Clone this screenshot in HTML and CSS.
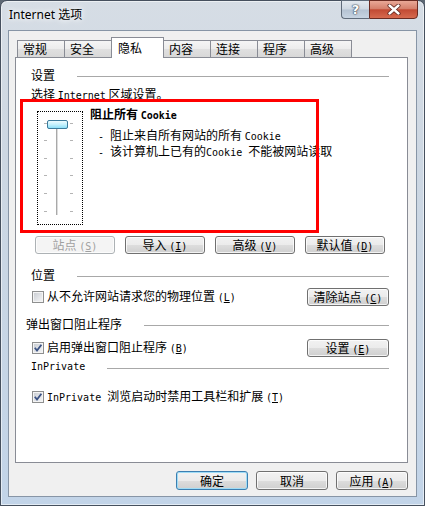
FILE: index.html
```html
<!DOCTYPE html>
<html lang="zh">
<head>
    <meta charset="UTF-8">
    <meta name="viewport" content="width=device-width, initial-scale=1.0">
    <title>Internet 选项</title>
    <link rel="stylesheet" href="styles.css">
</head>
<body>
    <div class="window">
        <!-- 标题栏 -->
        <div class="titlebar">
            <div class="title">Internet 选项</div>
            <div class="caption-buttons">
                <div class="cap-help">?</div>
                <div class="cap-close">
                    <svg width="14" height="11" viewBox="0 0 14 11">
                        <path d="M2.5 1.5 L11.5 9.5 M11.5 1.5 L2.5 9.5" stroke="#5a2018" stroke-width="4" stroke-linecap="round"/>
                        <path d="M2.5 1.5 L11.5 9.5 M11.5 1.5 L2.5 9.5" stroke="#fff" stroke-width="2.4" stroke-linecap="round"/>
                    </svg>
                </div>
            </div>
        </div>

        <div class="client">
            <!-- 选项卡 -->
            <div class="tabs">
                <div class="tab">常规</div>
                <div class="tab">安全</div>
                <div class="tab active">隐私</div>
                <div class="tab">内容</div>
                <div class="tab">连接</div>
                <div class="tab">程序</div>
                <div class="tab">高级</div>
            </div>

            <div class="tab-panel">
                <div class="group-title"><span>设置</span><div class="rule"></div></div>
                <div class="intro">选择 <span class="en">Internet</span> 区域设置。</div>

                <div class="level">
                    <div class="slider">
                        <svg width="44" height="112" viewBox="0 0 44 112">
                            <g stroke="#b4b4b4" stroke-width="1">
                                <path d="M6 11.5h3M32 11.5h3"/>
                                <path d="M6 28.5h3M32 28.5h3"/>
                                <path d="M6 46.5h3M32 46.5h3"/>
                                <path d="M6 63.5h3M32 63.5h3"/>
                                <path d="M6 81.5h3M32 81.5h3"/>
                                <path d="M6 99.5h3M32 99.5h3"/>
                            </g>
                            <rect x="18" y="14" width="1" height="89" fill="#a9a9a9"/>
                            <rect x="19" y="14" width="1" height="89" fill="#dcdcdc"/>
                            <defs>
                                <linearGradient id="thumb" x1="0" y1="0" x2="0" y2="1">
                                    <stop offset="0" stop-color="#f2fdff"/>
                                    <stop offset="0.5" stop-color="#c4f1fd"/>
                                    <stop offset="1" stop-color="#86ddf6"/>
                                </linearGradient>
                            </defs>
                            <rect x="9.5" y="8.5" width="20" height="8" rx="1.5" fill="url(#thumb)" stroke="#3b7b9c"/>
                        </svg>
                    </div>
                    <div class="level-text">
                        <div class="level-title">阻止所有 <span class="en">Cookie</span></div>
                        <div class="level-desc first"><span class="en">- </span>阻止来自所有网站的所有 <span class="en">Cookie</span></div>
                        <div class="level-desc"><span class="en">- </span>该计算机上已有的<span class="en">Cookie </span>不能被网站读取</div>
                    </div>
                </div>

                <div class="button-row">
                    <div class="btn disabled">站点 <span class="en">(<u>S</u>)</span></div>
                    <div class="btn">导入 <span class="en">(<u>I</u>)</span></div>
                    <div class="btn">高级 <span class="en">(<u>V</u>)</span></div>
                    <div class="btn">默认值 <span class="en">(<u>D</u>)</span></div>
                </div>

                <div class="group-title location"><span>位置</span><div class="rule"></div></div>
                <div class="check-row location-row">
                    <div class="check">
                        <span class="checkbox"></span>
                        <span>从不允许网站请求您的物理位置 <span class="en">(<u>L</u>)</span></span>
                    </div>
                    <div class="btn side">清除站点 <span class="en">(<u>C</u>)</span></div>
                </div>

                <div class="group-title popup"><span>弹出窗口阻止程序</span><div class="rule"></div></div>
                <div class="check-row popup-row">
                    <div class="check">
                        <span class="checkbox checked"><svg width="10" height="10" viewBox="0 0 10 10"><path d="M1.8 4.8 L4 7.6 L8.4 1.8" fill="none" stroke="#3b5284" stroke-width="1.8"/></svg></span>
                        <span>启用弹出窗口阻止程序 <span class="en">(<u>B</u>)</span></span>
                    </div>
                    <div class="btn side">设置 <span class="en">(<u>E</u>)</span></div>
                </div>

                <div class="group-title inprivate"><span class="en">InPrivate</span><div class="rule"></div></div>
                <div class="check-row inprivate-row">
                    <div class="check">
                        <span class="checkbox checked"><svg width="10" height="10" viewBox="0 0 10 10"><path d="M1.8 4.8 L4 7.6 L8.4 1.8" fill="none" stroke="#3b5284" stroke-width="1.8"/></svg></span>
                        <span><span class="en">InPrivate </span>浏览启动时禁用工具栏和扩展 <span class="en">(<u>T</u>)</span></span>
                    </div>
                </div>

                <!-- 红色标注框 -->
                <div class="highlight"></div>
            </div>

            <div class="dialog-buttons">
                <div class="btn dialog default">确定</div>
                <div class="btn dialog">取消</div>
                <div class="btn dialog">应用 <span class="en">(<u>A</u>)</span></div>
            </div>
        </div>
    </div>
</body>
</html>
```

FILE: styles.css
```css
body {
    margin: 0;
    font-family: "Noto Sans CJK SC", sans-serif;
    font-size: 12px;
    color: #000;
    background-color: #5d6874;
}

.en {
    font-family: "DejaVu Sans Mono", "Liberation Mono", monospace;
    font-size: 10px;
}

.window {
    width: 425px;
    height: 506px;
    box-sizing: border-box;
    border: 1px solid #46505e;
    border-radius: 7px 7px 0 0;
    padding: 0 7px 8px 7px;
    background: linear-gradient(to bottom, #d6dde5 0%, #cdd7e2 30%, #c2d4e8 100%);
    box-shadow: inset 0 0 0 1px rgba(255, 255, 255, 0.55);
    display: flex;
    flex-direction: column;
}

/* 标题栏 */
.titlebar {
    height: 29px;
    display: flex;
    align-items: flex-start;
}

.title {
    margin-top: 7px;
    padding-left: 1px;
    line-height: 14px;
    font-family: "Noto Sans", "Noto Sans CJK SC", sans-serif;
    font-size: 12px;
    text-shadow: 0 0 5px #fff, 0 0 8px #fff;
}

.caption-buttons {
    display: flex;
    margin-left: auto;
    margin-right: -1px;
    margin-top: -1px;
}

.cap-help {
    width: 28px;
    height: 19px;
    box-sizing: border-box;
    border: 1px solid #5f6b7a;
    border-right: none;
    border-radius: 0 0 0 4px;
    background: linear-gradient(to bottom, #e3e9ef 0%, #cfd8e2 48%, #b4c2d2 52%, #c7d4e2 100%);
    text-align: center;
    font-family: "DejaVu Sans", sans-serif;
    font-weight: bold;
    font-size: 13px;
    line-height: 17px;
    color: #fff;
    text-shadow: 0 0 1px #3d4a5a, 0 0 1px #3d4a5a, 0 0 2px #3d4a5a;
}

.cap-close {
    width: 49px;
    height: 19px;
    box-sizing: border-box;
    border: 1px solid #6a2b22;
    border-radius: 0 0 4px 0;
    background: linear-gradient(to bottom, #e9a897 0%, #d5806c 45%, #c24a33 52%, #d66a4f 100%);
    display: flex;
    justify-content: center;
    align-items: center;
}

/* 客户区 */
.client {
    flex: 1;
    background-color: #f0f0f0;
    border: 1px solid #8795a6;
    padding: 0 8px 6px 6px;
    display: flex;
    flex-direction: column;
}

.tabs {
    display: flex;
    align-items: flex-end;
    height: 20px;
    padding-top: 6px;
    margin-left: 2px;
    position: relative;
    z-index: 1;
}

.tab {
    width: 48px;
    height: 17px;
    box-sizing: border-box;
    border: 1px solid #898c95;
    border-bottom: none;
    margin-right: -1px;
    padding-left: 5px;
    line-height: 16px;
    background: linear-gradient(to bottom, #f5f5f5 0%, #ececec 50%, #e0e0e0 51%, #d8d8d8 100%);
}

    .tab.active {
        width: 53px;
        height: 21px;
        margin-bottom: -1px;
        padding-left: 6px;
        line-height: 19px;
        background: #fff;
    }

.tab-panel {
    position: relative;
    height: 406px;
    box-sizing: border-box;
    border: 1px solid #898c95;
    background-color: #fff;
    padding: 10px 18px 0 15px;
}

.group-title {
    display: flex;
    align-items: center;
    gap: 22px;
    line-height: 14px;
}

    .group-title .rule {
        flex: 1;
        height: 1px;
        margin-top: 2px;
        background-color: #a8a8a8;
    }

    .group-title.location {
        margin-top: 14px;
    }

    .group-title.popup {
        margin-top: 11px;
        margin-left: -5px;
    }

    .group-title.inprivate {
        margin-top: 3px;
    }

.intro {
    margin-top: 5px;
    line-height: 14px;
}

.level {
    display: flex;
    margin: 8px 0 0 6px;
}

.slider {
    width: 46px;
    height: 114px;
    box-sizing: border-box;
    border: 1px dotted #000;
}

    .slider svg {
        display: block;
    }

.level-text {
    margin-left: 7px;
    margin-top: -4px;
}

.level-title {
    font-weight: bold;
    line-height: 14px;
}

.level-desc {
    line-height: 14px;
    padding-left: 8px;
}

    .level-desc.first {
        margin-top: 5px;
    }

/* 按钮 */
.btn {
    width: 80px;
    height: 18px;
    box-sizing: border-box;
    border: 1px solid #707070;
    border-radius: 3px;
    background: linear-gradient(to bottom, #f2f2f2 0%, #ebebeb 50%, #dddddd 51%, #cfcfcf 100%);
    box-shadow: inset 0 0 0 1px rgba(255, 255, 255, 0.75);
    text-align: center;
    line-height: 16px;
    white-space: nowrap;
}

    .btn.disabled {
        border-color: #adb2b5;
        background: #f4f4f4;
        color: #a0a0a0;
    }

    .btn.side {
        width: 82px;
    }

    .btn.dialog {
        width: 72px;
        height: 19px;
        line-height: 17px;
    }

    .btn.default {
        border-color: #3c7fb1;
        box-shadow: inset 0 0 0 1px #9fdcf6;
    }

.button-row {
    display: flex;
    gap: 10px;
    margin: 11px 0 0 4px;
}

.check-row {
    display: flex;
    align-items: center;
    justify-content: space-between;
    height: 18px;
}

    .check-row.location-row {
        margin-top: 6px;
    }

    .check-row.popup-row {
        margin-top: 8px;
    }

    .check-row.inprivate-row {
        margin-top: 14px;
    }

.check {
    display: flex;
    align-items: center;
    gap: 3px;
    margin-left: 1px;
    line-height: 14px;
}

.checkbox {
    width: 12px;
    height: 12px;
    box-sizing: border-box;
    border: 1px solid #8e8f8f;
    background: linear-gradient(135deg, #c6cad0 0%, #e4e6e9 60%, #f6f6f6 100%);
    box-shadow: inset 0 0 0 1px #f4f4f4;
    display: flex;
    justify-content: center;
    align-items: center;
}

    .checkbox svg {
        display: block;
    }

.dialog-buttons {
    display: flex;
    justify-content: flex-end;
    gap: 8px;
    margin-top: 8px;
}

/* 红色标注框 */
.highlight {
    position: absolute;
    left: 4px;
    top: 41px;
    width: 299px;
    height: 134px;
    box-sizing: border-box;
    border: 3px solid #ff0000;
}
```
